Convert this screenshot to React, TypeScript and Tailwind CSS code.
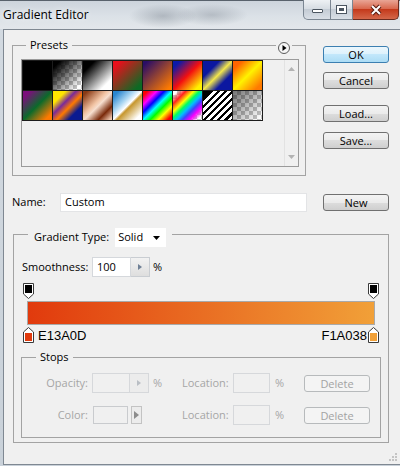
import React from "react";

const font = "font-['Open_Sans',sans-serif]";

// preset gradient thumbnails, left to right, top row then bottom row
const presets: string[] = [
  "bg-black",
  "[background-image:linear-gradient(135deg,#000_12%,rgba(0,0,0,0)_88%),repeating-conic-gradient(#c4c4c4_0_25%,#fff_0_50%)] [background-size:100%_100%,8px_8px]",
  "bg-[linear-gradient(135deg,#000_20%,#fff_80%)]",
  "bg-[linear-gradient(135deg,#ea0f1c_12%,#0c6a24_88%)]",
  "bg-[linear-gradient(135deg,#2a0d66_8%,#ff7b00_92%)]",
  "bg-[linear-gradient(135deg,#0b19aa_12%,#f31010_50%,#fff200_88%)]",
  "bg-[linear-gradient(135deg,#0b17a0_28%,#f2e64c_50%,#0b17a0_72%)]",
  "bg-[linear-gradient(135deg,#ff6400_15%,#fff200_50%,#ff7a00_88%)]",
  "bg-[linear-gradient(135deg,#7c0f7c_12%,#0b6a2b_50%,#ff7a00_88%)]",
  "bg-[linear-gradient(135deg,#ffe600_22%,#7a2a9a_40%,#ff7a00_56%,#0a1a90_76%)]",
  "bg-[linear-gradient(135deg,#8a3a14_8%,#f2c4a4_42%,#f7dfcf_52%,#7a2a0a_76%,#f0c8b0_96%)]",
  "bg-[linear-gradient(135deg,#2a86cf_10%,#aad6f2_36%,#fff_50%,#c6962c_56%,#fff_88%)]",
  "bg-[linear-gradient(135deg,#ff0000_8%,#ff00ff_24%,#0000ff_37%,#00ffff_50%,#00ff00_62%,#ffff00_76%,#ff0000_92%)]",
  "[background-image:linear-gradient(135deg,rgba(255,0,0,0)_8%,#ff2020_22%,#ffff00_36%,#00ff60_46%,#00c0ff_56%,#4040ff_66%,#ff00ff_78%,rgba(255,0,255,0)_92%),repeating-conic-gradient(#c4c4c4_0_25%,#fff_0_50%)] [background-size:100%_100%,8px_8px]",
  "[background-image:linear-gradient(135deg,#000_14%,rgba(0,0,0,0)_15%),repeating-linear-gradient(135deg,#000_0_2.5px,#fff_2.5px_5px)]",
  "[background-image:linear-gradient(135deg,rgba(0,0,0,0.55)_0%,rgba(0,0,0,0)_95%),repeating-conic-gradient(#c4c4c4_0_25%,#fff_0_50%)] [background-size:100%_100%,8px_8px]",
];

const Button = ({
  children,
  primary,
  disabled,
}: {
  children: React.ReactNode;
  primary?: boolean;
  disabled?: boolean;
}) => (
  <div
    className={
      primary
        ? "w-[66px] h-[17px] rounded-[3px] border border-[#3c7fb1] bg-[linear-gradient(#ecf7fd,#dcf1fc_50%,#c2e7fb_50%,#acdcf5)] flex items-center justify-center text-[11px] leading-none text-black"
        : disabled
        ? "w-[66px] h-[17px] rounded-[3px] border border-[#b7babc] bg-[#f4f4f4] flex items-center justify-center text-[11px] leading-none text-[#a3a3a3]"
        : "w-[66px] h-[17px] rounded-[3px] border border-[#707070] bg-[linear-gradient(#f3f3f3,#ebebeb_50%,#dddddd_50%,#cfcfcf)] flex items-center justify-center text-[11px] leading-none text-black"
    }
  >
    {children}
  </div>
);

const SpinArrow = ({ color }: { color: string }) => (
  <svg width="4" height="6" viewBox="0 0 4 6">
    <path d="M0 0L4 3L0 6Z" fill={color} />
  </svg>
);

const TopStop = () => (
  <svg width="11" height="16" viewBox="0 0 11 16">
    <path d="M0.5 0.5H10.5V11L5.5 15.5L0.5 11Z" fill="#fff" stroke="#3a3a3a" />
    <rect x="2" y="2" width="7" height="8" fill="#000" />
  </svg>
);

const BottomStop = ({ color }: { color: string }) => (
  <svg width="11" height="16" viewBox="0 0 11 16">
    <path d="M5.5 0.5L10.5 5V15.5H0.5V5Z" fill="#fff" stroke="#3a3a3a" />
    <rect x="2" y="6" width="7" height="8" fill={color} />
  </svg>
);

const TitleBar = () => (
  <div className="h-[29px] flex items-start bg-[radial-gradient(34px_12px_at_163px_16px,rgba(96,106,118,0.35),transparent),radial-gradient(36px_11px_at_212px_15px,rgba(96,106,118,0.3),transparent),linear-gradient(#59626c_0_1px,#cdd4dc_1px,#dbe1e7_55%,#e3e7eb)]">
    <span className="ml-[3px] mt-[6px] text-[12px] leading-[17px] text-black [text-shadow:0_0_6px_#fff]">
      Gradient Editor
    </span>
    <div className="ml-auto mr-px flex">
      <div className="w-[28px] h-[20px] border border-t-0 border-[#7b8692] rounded-bl-[5px] bg-[linear-gradient(#eef1f4,#d7dde3_45%,#c4ccd5_50%,#d9dfe6)] flex justify-center">
        <div className="mt-[9px] w-[11px] h-[4px] rounded-[1px] border border-[#4b5560] bg-white" />
      </div>
      <div className="w-[22px] h-[20px] border border-l-0 border-t-0 border-[#7b8692] bg-[linear-gradient(#eef1f4,#d7dde3_45%,#c4ccd5_50%,#d9dfe6)] flex justify-center">
        <div className="mt-[5px] w-[11px] h-[9px] border border-[#4b5560] bg-white p-[2px]">
          <div className="w-full h-full border border-[#4b5560] border-t-2" />
        </div>
      </div>
      <div className="w-[46px] h-[20px] border border-l-0 border-t-0 border-[#6b2b1f] rounded-br-[5px] bg-[linear-gradient(#e9a595,#d9694f_45%,#c43a1c_50%,#d4674a)] flex items-center justify-center">
        <svg width="14" height="12" viewBox="0 0 14 12">
          <path d="M3 2L11 10M11 2L3 10" stroke="#5a1b10" strokeWidth="4" />
          <path d="M3 2L11 10M11 2L3 10" stroke="#fff" strokeWidth="2" />
        </svg>
      </div>
    </div>
  </div>
);

const PresetsGroup = () => (
  <div className="w-[294px] border border-[#a3a3a3] pb-[8px]">
    <div className="-mt-[9px] h-[16px] flex items-start">
      <span className="ml-[13px] px-[4px] bg-[#f0f0f0] text-[11px] leading-[16px] text-black">Presets</span>
      <span className="ml-auto mr-[13px] px-[2px] self-stretch bg-[#f0f0f0]">
        <svg width="12" height="12" viewBox="0 0 12 12" className="mt-[5px]">
          <circle cx="6" cy="6" r="5.5" fill="#f6f6f6" stroke="#5a5a5a" />
          <path d="M4.5 3L8.5 6L4.5 9Z" fill="#000" />
        </svg>
      </span>
    </div>
    <div className="mt-[6px] ml-[8px] w-[278px] h-[108px] border border-[#9a9a9a] bg-[#f0f0f0] flex">
      <div className="self-start grid grid-cols-[repeat(8,29px)] auto-rows-[29px] gap-px p-px bg-[#1c1c1c]">
        {presets.map((cls, i) => (
          <div key={i} className={cls} />
        ))}
      </div>
      <div className="ml-auto w-[14px] border-l border-[#e2e2e2] flex flex-col items-center justify-between py-[7px]">
        <svg width="7" height="4" viewBox="0 0 7 4">
          <path d="M0 4L3.5 0L7 4Z" fill="#b3b3b3" />
        </svg>
        <svg width="7" height="4" viewBox="0 0 7 4">
          <path d="M0 0L3.5 4L7 0Z" fill="#b3b3b3" />
        </svg>
      </div>
    </div>
  </div>
);

const LocationField = () => (
  <>
    <span className="w-[46px]">Location:</span>
    <div className="ml-[5px] w-[37px] h-[20px] border border-[#d6d8db] bg-[#f0f0f0]" />
    <span className="ml-[5px] w-[29px]">%</span>
    <Button disabled>Delete</Button>
  </>
);

const StopsGroup = () => (
  <div className="mt-[14px] ml-[7px] w-[360px] border border-[#a3a3a3] pb-[12px] text-[11px] text-[#a6a6a6]">
    <div className="-mt-[9px] h-[16px] flex">
      <span className="ml-[14px] px-[4px] bg-[#f0f0f0] leading-[16px] text-black">Stops</span>
    </div>
    <div className="mt-[8px] h-[20px] flex items-center">
      <span className="w-[66px] text-right">Opacity:</span>
      <div className="ml-[4px] flex h-[20px]">
        <div className="w-[38px] border border-[#d6d8db] bg-[#f0f0f0]" />
        <div className="w-[19px] border border-l-0 border-[#d6d8db] bg-[#ececec] flex items-center justify-center">
          <SpinArrow color="#b9bec4" />
        </div>
      </div>
      <span className="ml-[4px] w-[29px]">%</span>
      <LocationField />
    </div>
    <div className="mt-[12px] h-[20px] flex items-center">
      <span className="w-[66px] text-right">Color:</span>
      <div className="ml-[5px] w-[35px] h-[18px] border border-[#c9cbce] bg-[#f0f0f0]" />
      <div className="ml-[3px] w-[11px] h-[18px] border border-[#c3c3c3] bg-[#ececec] flex items-center justify-center">
        <svg width="5" height="8" viewBox="0 0 5 8">
          <path d="M0 0L5 4L0 8Z" fill="#8c8c8c" />
        </svg>
      </div>
      <span className="ml-[40px]" />
      <LocationField />
    </div>
  </div>
);

const GradientGroup = () => (
  <div className="mt-[22px] ml-px w-[376px] border border-[#a3a3a3] pb-[4px] text-[11px] text-black">
    <div className="-mt-[7px] h-[19px] flex">
      <div className="ml-[14px] px-[6px] bg-[#f0f0f0] flex items-center">
        <span>Gradient Type:</span>
        <div className="ml-[6px] w-[51px] h-[19px] bg-white flex items-center pl-[3px] pr-[6px]">
          <span>Solid</span>
          <svg width="7" height="4" viewBox="0 0 7 4" className="ml-auto">
            <path d="M0 0H7L3.5 4Z" fill="#000" />
          </svg>
        </div>
      </div>
    </div>
    <div className="mt-[10px] pl-[8px] h-[20px] flex items-center">
      <span className="w-[70px]">Smoothness:</span>
      <div className="flex h-[20px]">
        <div className="w-[39px] border border-[#d5d8dc] bg-white pl-[4px] flex items-center">100</div>
        <div className="w-[19px] border border-l-0 border-[#c9cdd2] bg-[linear-gradient(#f2f2f2,#dedede)] flex items-center justify-center">
          <SpinArrow color="#6f8096" />
        </div>
      </div>
      <span className="ml-[3px]">%</span>
    </div>
    <div className="mt-[6px] ml-[9px] w-[356px]">
      <div className="h-[16px] flex justify-between">
        <TopStop />
        <TopStop />
      </div>
      <div className="mt-[2px] mx-[4px] h-[24px] border border-[#a9a9a9] bg-[linear-gradient(to_right,#e13a0d,#f1a038)]" />
      <div className="mt-[2px] h-[16px] flex items-end justify-between font-['Liberation_Sans',Arial,sans-serif] text-[13px] leading-[15px]">
        <div className="flex items-end">
          <BottomStop color="#e13a0d" />
          <span className="ml-[4px]">E13A0D</span>
        </div>
        <div className="flex items-end">
          <span className="mr-px">F1A038</span>
          <BottomStop color="#f1a038" />
        </div>
      </div>
    </div>
    <StopsGroup />
  </div>
);

export default function App() {
  return (
    <div className={`${font} w-[400px] h-[466px] flex flex-col overflow-hidden bg-[linear-gradient(#d3dae1,#c9d1d9)]`}>
      <TitleBar />
      <div className="flex-1 mb-px ml-[3px] border-l border-t border-b border-[#7f8892] bg-[#f0f0f0] pt-[15px] pl-[8px] flex flex-col">
        <div className="flex items-start">
          <PresetsGroup />
          <div className="ml-[17px] mt-px flex flex-col">
            <Button primary>OK</Button>
            <div className="mt-[9px]">
              <Button>Cancel</Button>
            </div>
            <div className="mt-[16px]">
              <Button>Load...</Button>
            </div>
            <div className="mt-[10px]">
              <Button>Save...</Button>
            </div>
          </div>
        </div>
        <div className="mt-[17px] h-[19px] flex items-center text-[11px] text-black">
          <span className="w-[48px]">Name:</span>
          <div className="w-[247px] h-[19px] border border-[#e3e4e6] bg-white pl-[4px] flex items-center">Custom</div>
          <div className="ml-[16px]">
            <Button>New</Button>
          </div>
        </div>
        <GradientGroup />
        <svg width="8" height="8" viewBox="0 0 8 8" className="mt-auto mb-[3px] mr-[3px] self-end">
          <rect x="6" y="0" width="2" height="2" fill="#c4c4c4" />
          <rect x="3" y="3" width="2" height="2" fill="#c4c4c4" />
          <rect x="6" y="3" width="2" height="2" fill="#c4c4c4" />
          <rect x="0" y="6" width="2" height="2" fill="#c4c4c4" />
          <rect x="3" y="6" width="2" height="2" fill="#c4c4c4" />
          <rect x="6" y="6" width="2" height="2" fill="#c4c4c4" />
        </svg>
      </div>
    </div>
  );
}
